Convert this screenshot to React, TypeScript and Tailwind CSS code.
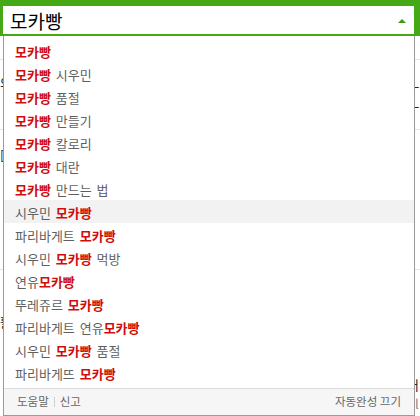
const FONT = "font-['Noto_Sans_CJK_KR','Noto_Sans',sans-serif]";

type Part = { t: string; hit?: boolean };

const SUGGESTIONS: Part[][] = [
  [{ t: "모카빵", hit: true }],
  [{ t: "모카빵", hit: true }, { t: " 시우민" }],
  [{ t: "모카빵", hit: true }, { t: " 품절" }],
  [{ t: "모카빵", hit: true }, { t: " 만들기" }],
  [{ t: "모카빵", hit: true }, { t: " 칼로리" }],
  [{ t: "모카빵", hit: true }, { t: " 대란" }],
  [{ t: "모카빵", hit: true }, { t: " 만드는 법" }],
  [{ t: "시우민 " }, { t: "모카빵", hit: true }],
  [{ t: "파리바게트 " }, { t: "모카빵", hit: true }],
  [{ t: "시우민 " }, { t: "모카빵", hit: true }, { t: " 먹방" }],
  [{ t: "연유" }, { t: "모카빵", hit: true }],
  [{ t: "뚜레쥬르 " }, { t: "모카빵", hit: true }],
  [{ t: "파리바게트 연유" }, { t: "모카빵", hit: true }],
  [{ t: "시우민 " }, { t: "모카빵", hit: true }, { t: " 품절" }],
  [{ t: "파리바게뜨 " }, { t: "모카빵", hit: true }],
];

export default function App() {
  return (
    <div className={`relative w-[420px] h-[416px] overflow-hidden bg-white ${FONT}`}>
      {/* page underneath the autocomplete layer */}
      <div className="flex flex-col text-[13px] leading-none">
        <div className="h-[60px] border-b border-[#e4e4e4]" />
        <div className="h-[70px] border-b border-[#e4e4e4] flex justify-between pt-[16px]">
          <span className="text-[#222]">의</span>
          <div className="flex flex-col gap-[7px] pr-[1px] text-[#1a1a8c]">
            <span>L</span>
            <span>L</span>
          </div>
        </div>
        <div className="h-[140px] border-b border-[#e4e4e4] pt-[18px]">
          <span className="text-[#222]">[</span>
        </div>
        <div className="h-[145px] flex justify-between">
          <span className="pt-[45px] text-[#222]">활</span>
          <div className="flex flex-col gap-[6px] pt-[108px] pr-[1px]">
            <span className="text-[#222]">서</span>
            <span className="text-[#888]">nl</span>
          </div>
        </div>
      </div>

      {/* search box + suggestion dropdown */}
      <div className="absolute inset-x-0 top-0">
        <div className="h-[36px] bg-white border-[#45a916] border-t-[6px] border-l-[3px] border-r-[6px] border-b-2 flex items-center justify-between pl-[7px] pr-[8px]">
          <span className="text-[19px] leading-none text-black">모카빵</span>
          <span className="w-0 h-0 border-x-[4px] border-x-transparent border-b-[4px] border-b-[#3c9a12] mt-[2px]" />
        </div>

        <div className="ml-[3px] w-[412px] bg-white border-x border-b border-[#9a9a9a]">
          <ul className="pt-[3px] pb-[4px]">
            {SUGGESTIONS.map((parts, i) => (
              <li
                key={i}
                className={`h-[23px] flex items-center pl-[11px] pt-[1px] text-[13px] leading-none text-[#5f5f5f] whitespace-pre [word-spacing:2px] ${
                  i === 7 ? "bg-[#f2f2f2]" : ""
                }`}
              >
                {parts.map((p, j) =>
                  p.hit ? (
                    <b key={j} className="font-bold text-[#cf0d0d]">
                      {p.t}
                    </b>
                  ) : (
                    <span key={j}>{p.t}</span>
                  )
                )}
              </li>
            ))}
          </ul>
          <div className="h-[27px] border-t border-[#dcdcdc] bg-[#f6f6f6] flex items-center justify-between pl-[13px] pr-[13px] text-[11.5px] leading-none text-[#666]">
            <div className="flex items-center">
              <span>도움말</span>
              <span className="mx-[5px] w-px h-[10px] bg-[#cfcfcf]" />
              <span>신고</span>
            </div>
            <span>자동완성 끄기</span>
          </div>
        </div>
      </div>
    </div>
  );
}
